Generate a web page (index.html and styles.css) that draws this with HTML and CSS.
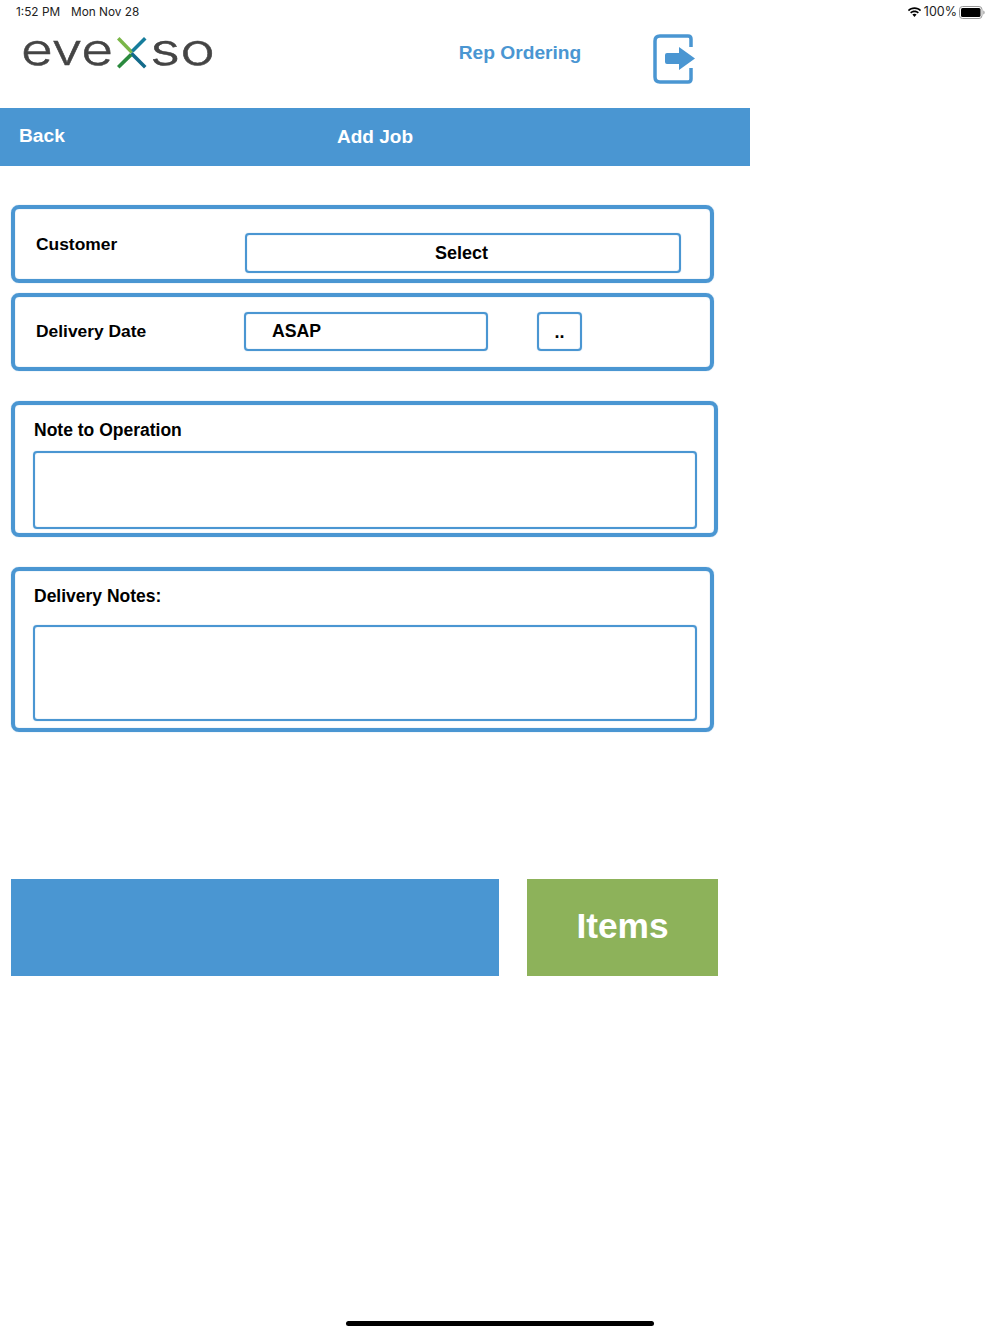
FILE: index.html
```html
<!DOCTYPE html>
<html lang="en">
<head>
    <meta charset="UTF-8">
    <meta name="viewport" content="width=device-width, initial-scale=1.0">
    <title>Add Job</title>
    <link rel="stylesheet" href="styles.css">
</head>
<body>
    <div class="status-bar">
        <div class="status-left">
            <span>1:52 PM</span>
            <span>Mon Nov 28</span>
        </div>
        <div class="status-right">
            <svg class="wifi" width="15" height="11" viewBox="0 0 16 12">
                <path d="M8 2.200c2.300 0 4.400.9 6 2.400l1.200-1.300C13.300 1.400 10.800.3 8 .3S2.700 1.400.8 3.300L2 4.600c1.600-1.500 3.700-2.400 6-2.400z" fill="#000"/>
                <path d="M8 5.600c1.400 0 2.600.5 3.600 1.400l1.200-1.300C11.500 4.500 9.800 3.800 8 3.800s-3.500.7-4.800 1.900L4.400 7c1-.9 2.200-1.400 3.600-1.400z" fill="#000"/>
                <path d="M8 7.400c-.9 0-1.700.3-2.300.9L8 10.800l2.300-2.500c-.6-.6-1.400-.9-2.300-.9z" fill="#000"/>
            </svg>
            <span>100%</span>
            <svg class="battery" width="26" height="13" viewBox="0 0 26 13">
                <rect x="0.500" y="0.500" width="22.500" height="12" rx="3" fill="none" stroke="#999"/>
                <rect x="2" y="2" width="19.500" height="9" rx="1.500" fill="#000"/>
                <path d="M24.300 4.500c.8.300 1.300 1 1.300 2s-.5 1.700-1.300 2z" fill="#999"/>
            </svg>
        </div>
    </div>

    <header class="top-header">
        <svg class="logo" width="196" height="54" viewBox="0 0 196 54">
            <text x="0" y="45" class="logo-text" textLength="92" lengthAdjust="spacingAndGlyphs">eve</text>
            <text x="129" y="45" class="logo-text" textLength="65" lengthAdjust="spacingAndGlyphs">so</text>
            <g transform="translate(0 12.500)">
                <path d="M96 7 L98.500 4.500 L112.300 18.700 L109.800 21.200 Z" fill="#7ab648"/>
                <path d="M109 22 L111.600 19.500 L125.500 33.500 L123 36 Z" fill="#136a8a"/>
                <path d="M123 4.500 L125.500 7 L112.500 20 L110 17.500 Z" fill="#167d9c"/>
                <path d="M108.800 20.800 L111.400 23.400 L98.500 36 L96 33.500 Z" fill="#2b8a3e"/>
            </g>
        </svg>
        <div class="app-title">Rep Ordering</div>
        <svg class="logout" width="44" height="52" viewBox="0 0 44 52">
            <path d="M39 14 V6 Q39 3 36 3 H8 Q3 3 3 8 V44 Q3 49 8 49 H36 Q39 49 39 46 V35" fill="none" stroke="#4a96d2" stroke-width="3.500"/>
            <path d="M15 20 H27 V14 L43 25.500 L27 37 V31 H15 Q13 31 13 29 V22 Q13 20 15 20 Z" fill="#4a96d2"/>
        </svg>
    </header>

    <nav class="nav-bar">
        <a class="back">Back</a>
        <h1 class="nav-title">Add Job</h1>
    </nav>

    <main class="form-area">
        <section class="card card-row">
            <label class="row-label label-customer">Customer</label>
            <div class="field field-select">Select</div>
        </section>

        <section class="card card-row card-date">
            <label class="row-label">Delivery Date</label>
            <div class="field field-date">ASAP</div>
            <div class="field field-dots">..</div>
        </section>

        <section class="card card-note">
            <label class="note-label">Note to Operation</label>
            <div class="field note-box"></div>
        </section>

        <section class="card card-delivery">
            <label class="note-label">Delivery Notes:</label>
            <div class="field note-box delivery-box"></div>
        </section>

        <div class="actions">
            <div class="action-blue"></div>
            <button class="action-items">Items</button>
        </div>
    </main>

    <div class="home-bar"></div>
</body>
</html>
```

FILE: styles.css
```css
* {
    box-sizing: border-box;
}

body {
    position: relative;
    width: 1000px;
    height: 1334px;
    margin: 0;
    overflow: hidden;
    background: white;
    color: black;
    font-family: "Liberation Sans", Arial, sans-serif;
}

.status-bar {
    display: flex;
    justify-content: space-between;
    height: 24px;
    padding: 5px 15px 0 16px;
    font-family: Inter, sans-serif;
    line-height: 14px;
    color: #222;
}

.status-left {
    display: flex;
    gap: 11px;
    font-size: 11.800px;
}

.status-right {
    display: flex;
    align-items: center;
    align-self: flex-start;
    gap: 2px;
    font-size: 12.500px;
}

.top-header {
    display: flex;
    align-items: flex-start;
    height: 84px;
}

.logo {
    margin: -4px 0 0 21px;
}

.logo-text {
    font-family: Inter, sans-serif;
    font-weight: 300;
    font-size: 43px;
    fill: #444;
    stroke: #444;
    stroke-width: 0.500px;
}

.app-title {
    width: 240px;
    margin: 17px 0 0 183px;
    text-align: center;
    font-size: 19.200px;
    font-weight: bold;
    line-height: 24px;
    color: #4a96d2;
}

.logout {
    margin: 9px 0 0 12px;
}

.nav-bar {
    display: grid;
    grid-template-columns: 1fr auto 1fr;
    align-items: center;
    width: 750px;
    height: 58px;
    padding-left: 19px;
    background: #4a96d2;
    color: white;
    font-size: 19.200px;
    font-weight: bold;
}

.back {
    margin-top: -2px;
}

.nav-title {
    margin: 0 19px 0 0;
    font-size: 19px;
}

.form-area {
    padding: 39px 0 0 11px;
}

.card {
    width: 703px;
    border: 4px solid #4a96d2;
    border-radius: 8px;
    box-shadow: 0 0 1px rgba(74, 150, 210, 0.7), inset 0 0 1px rgba(74, 150, 210, 0.7);
}

.card-row {
    display: flex;
    align-items: flex-start;
    height: 78px;
    padding-left: 21px;
    margin-bottom: 10px;
}

.row-label {
    width: 209px;
    font-size: 17.400px;
    font-weight: bold;
    line-height: 22px;
}

.label-customer {
    margin-top: 24px;
}

.card-date .row-label {
    width: 208px;
    margin-top: 23px;
}

.field {
    border: 2px solid #4a96d2;
    border-radius: 4px;
    font-size: 18px;
    font-weight: bold;
    box-shadow: 0 0 1px rgba(74, 150, 210, 0.7), inset 0 0 1px rgba(74, 150, 210, 0.7);
}

.field-select {
    width: 436px;
    height: 40px;
    margin-top: 24px;
    line-height: 36px;
    text-align: center;
    padding-right: 3px;
}

.field-date {
    width: 244px;
    height: 39px;
    margin-top: 15px;
    padding-left: 26px;
    font-size: 17.700px;
    line-height: 34px;
}

.field-dots {
    width: 45px;
    height: 39px;
    margin: 15px 0 0 49px;
    line-height: 37px;
    text-align: center;
}

.card-note {
    width: 707px;
    height: 136px;
    margin-top: 30px;
    padding: 14px 0 0 18px;
}

.card-delivery {
    height: 165px;
    margin-top: 30px;
    padding: 14px 0 0 18px;
}

.note-label {
    display: block;
    padding-left: 1px;
    font-size: 17.500px;
    font-weight: bold;
    line-height: 22px;
}

.note-box {
    width: 664px;
    height: 78px;
    margin-top: 10px;
}

.delivery-box {
    height: 96px;
    margin-top: 18px;
}

.actions {
    display: flex;
    gap: 28px;
    margin-top: 147px;
}

.action-blue {
    width: 488px;
    height: 97px;
    background: #4a96d2;
}

.action-items {
    width: 191px;
    height: 97px;
    padding: 0 0 4px;
    border: none;
    background: #8db25a;
    color: white;
    font-family: "Liberation Sans", Arial, sans-serif;
    font-size: 35.300px;
    font-weight: bold;
}

.home-bar {
    position: absolute;
    left: 346px;
    top: 1321px;
    width: 308px;
    height: 5px;
    border-radius: 3px;
    background: black;
}
```
